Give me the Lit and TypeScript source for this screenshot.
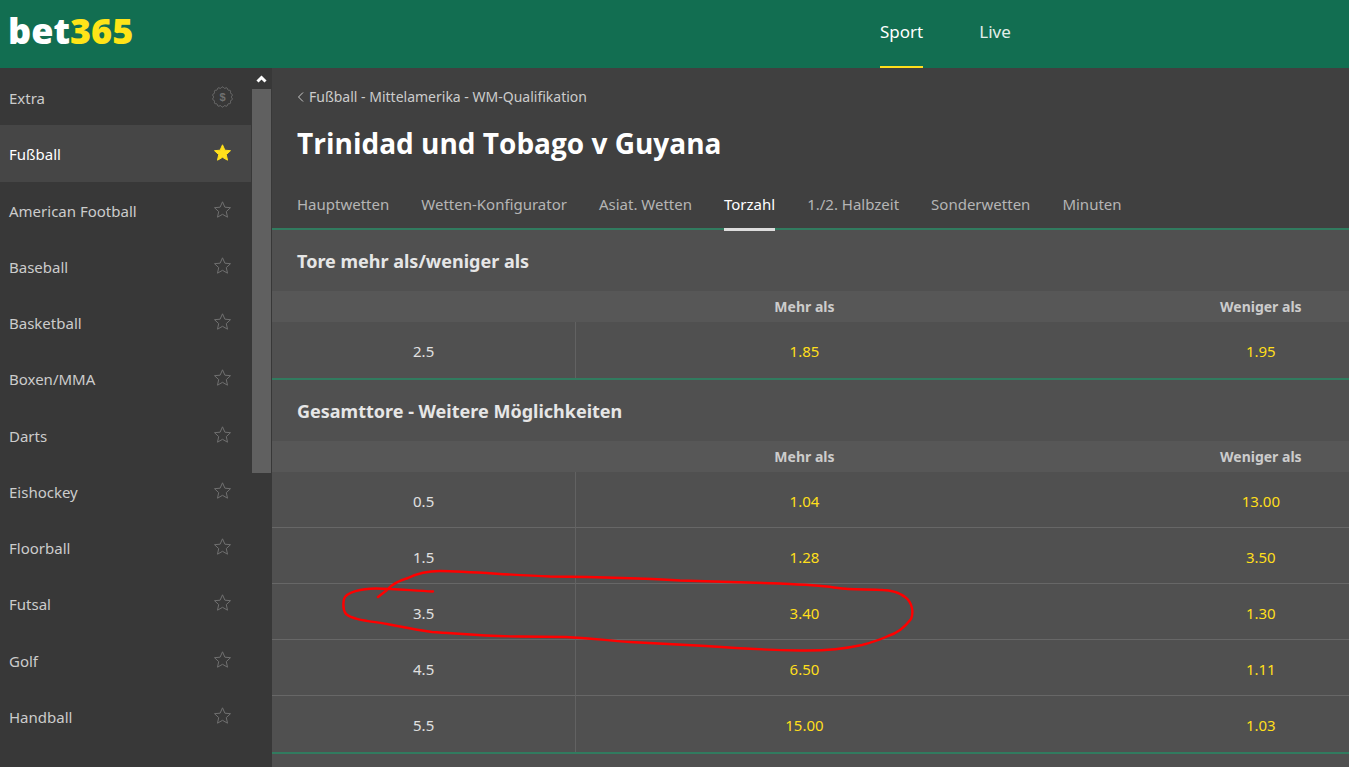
import { LitElement, html, css, svg } from "lit";
import { customElement, property } from "lit/decorators.js";
import { classMap } from "lit/directives/class-map.js";

const SPORTS = [
  "Extra", "Fußball", "American Football", "Baseball", "Basketball", "Boxen/MMA",
  "Darts", "Eishockey", "Floorball", "Futsal", "Golf", "Handball",
];

const TABS = [
  "Hauptwetten", "Wetten-Konfigurator", "Asiat. Wetten", "Torzahl",
  "1./2. Halbzeit", "Sonderwetten", "Minuten",
];

type Row = [string, string, string];

const MARKETS: { title: string; rows: Row[] }[] = [
  { title: "Tore mehr als/weniger als", rows: [["2.5", "1.85", "1.95"]] },
  {
    title: "Gesamttore - Weitere Möglichkeiten",
    rows: [
      ["0.5", "1.04", "13.00"],
      ["1.5", "1.28", "3.50"],
      ["3.5", "3.40", "1.30"],
      ["4.5", "6.50", "1.11"],
      ["5.5", "15.00", "1.03"],
    ],
  },
];

const starPath = "M11 2.8l2.4 5.4 5.6.5-4.2 3.9 1.2 5.6-5-2.9-5 2.9 1.2-5.6-4.2-3.9 5.6-.5z";

/* Scalloped badge outline around the coin symbol. */
const badgePath = (() => {
  const points: string[] = [];
  for (let i = 0; i <= 120; i++) {
    const a = (i / 120) * Math.PI * 2;
    const r = 9.5 + 0.6 * Math.cos(a * 14);
    points.push(`${(11 + r * Math.sin(a)).toFixed(2)} ${(11 - r * Math.cos(a)).toFixed(2)}`);
  }
  return `M${points.join("L")}Z`;
})();

@customElement("site-header")
export class SiteHeader extends LitElement {
  static styles = css`
    :host { display: block; }
    .bar {
      display: grid;
      grid-template-columns: 880fr 469fr;
      height: 68px;
      background: #126e51;
    }
    .logo {
      align-self: center;
      justify-self: start;
      margin-left: 8px;
      padding-bottom: 6px;
      display: flex;
      align-items: baseline;
      font: 800 36px/40px "Open Sans", sans-serif;
      color: #fff;
      text-decoration: none;
    }
    .digits { color: #ffe418; }
    .nav { display: flex; gap: 56px; }
    .link {
      box-sizing: border-box;
      height: 68px;
      padding-top: 20px;
      font-size: 17px;
      line-height: 24px;
      color: #e3eeea;
      text-decoration: none;
      border-bottom: 2px solid transparent;
    }
    .current { color: #fff; border-color: #ffdf1b; }
  `;
  render() {
    return html`
      <header class="bar">
        <a class="logo" href="#"><span>bet</span><span class="digits">365</span></a>
        <nav class="nav">
          <a class="link current" href="#sport">Sport</a>
          <a class="link" href="#live">Live</a>
        </nav>
      </header>
    `;
  }
}

@customElement("sport-list")
export class SportList extends LitElement {
  static styles = css`
    :host { display: flex; background: #383838; }
    .list {
      flex: 1;
      display: grid;
      grid-auto-rows: 1fr;
      height: 675px;
      margin: 0;
      padding: 1px 0 0;
      list-style: none;
    }
    .item { display: flex; align-items: center; padding: 0 18px 0 9px; }
    .active { background: #464646; }
    .name {
      flex: 1;
      font-size: 15px;
      line-height: 20px;
      padding-top: 2px;
      color: #ccc;
      text-decoration: none;
    }
    .active .name { color: #fff; }
    .mark {
      display: block;
      width: 22px;
      height: 22px;
      padding: 0;
      border: 0;
      background: none;
      color: #707070;
    }
    .active .mark { color: #ffdf1b; }
    .active path { fill: currentColor; }
    .icon { display: block; fill: none; stroke: currentColor; }
    .coin { fill: currentColor; stroke: none; font-size: 11px; font-weight: 700; text-anchor: middle; }
    .scroll { width: 19px; margin: 0 1px; }
    .up { display: block; width: 19px; height: 21px; padding: 0; border: 0; background: none; color: #fff; }
    .arrow { display: block; fill: none; stroke: currentColor; stroke-width: 3; }
    .thumb { height: 384px; background: #606060; }
  `;
  render() {
    return html`
      <ul class="list">
        ${SPORTS.map((name, i) => html`
          <li class=${classMap({ item: true, active: i === 1 })}>
            <a class="name" href="#">${name}</a>
            <button class="mark" aria-label="Favorit ${name}">
              <svg class="icon" width="22" height="22" viewBox="-0.5 0 22 22">
                ${i === 0
                  ? svg`<path d=${badgePath}/><text class="coin" x="11" y="15">$</text>`
                  : svg`<path d=${starPath}/>`}
              </svg>
            </button>
          </li>`)}
      </ul>
      <div class="scroll">
        <button class="up" aria-label="Nach oben">
          <svg class="arrow" width="19" height="21" viewBox="0 0 19 21"><path d="M5.5 13.500l4-4 4 4"/></svg>
        </button>
        <div class="thumb"></div>
      </div>
    `;
  }
}

@customElement("odds-market")
export class OddsMarket extends LitElement {
  @property() heading = "";
  @property({ attribute: false }) rows: Row[] = [];
  static styles = css`
    :host { display: block; border-bottom: 2px solid #317b5f; }
    .heading {
      margin: 0;
      padding: 19px 25px 18px;
      font-size: 18px;
      line-height: 24px;
      font-weight: 700;
      color: #e6e6e6;
    }
    .table { width: 100%; min-width: 1217px; border-spacing: 0; table-layout: fixed; text-align: center; }
    .line { width: 25%; }
    .head { height: 31px; padding: 0; background: #575757; color: #ccc; font-size: 14px; line-height: 20px; font-weight: 700; }
    .cell { box-sizing: border-box; height: 56px; padding: 2px 0 0; border-bottom: 1px solid #676767; font-size: 15px; line-height: 20px; font-weight: 400; color: #e0e0e0; }
    .label { border-right: 1px solid #626262; }
    .row:last-child .cell { border-bottom: 0; }
    .odds { width: 100%; padding: 0; border: 0; background: none; color: #ffdf1b; font: inherit; }
  `;
  render() {
    return html`
      <h2 class="heading">${this.heading}</h2>
      <table class="table" aria-label=${this.heading}>
        <thead>
          <tr><td class="head line"></td><th class="head" scope="col">Mehr als</th><th class="head" scope="col">Weniger als</th></tr>
        </thead>
        <tbody>
          ${this.rows.map(([line, over, under]) => html`
            <tr class="row">
              <th class="cell label" scope="row">${line}</th>
              <td class="cell"><button class="odds">${over}</button></td>
              <td class="cell"><button class="odds">${under}</button></td>
            </tr>`)}
        </tbody>
      </table>
    `;
  }
}

@customElement("app-root")
export class AppRoot extends LitElement {
  static styles = css`
    :host {
      display: flex;
      flex-direction: column;
      height: 100vh;
      overflow: hidden;
      font-family: "Noto Sans", "Segoe UI", sans-serif;
      background: #383838;
    }
    .body { flex: 1; min-height: 0; display: grid; grid-template-columns: 272px minmax(0, 1fr); }
    .main { position: relative; overflow: hidden; background: #505050; }
    .top { background: #404040; padding: 18px 25px 0; border-bottom: 2px solid #317b5f; }
    .crumb { display: flex; align-items: center; gap: 5px; font-size: 14px; line-height: 22px; color: #ccc; text-decoration: none; }
    .back { fill: none; stroke: currentColor; }
    .title { margin: 15px 0 0; font-family: "Open Sans", sans-serif; font-size: 28px; line-height: 40px; font-weight: 700; color: #fff; }
    .tabs { display: flex; gap: 32px; margin-top: 19px; }
    .tab { height: 46px; padding-top: 12px; box-sizing: border-box; font-size: 15px; line-height: 20px; color: #b5b5b5; text-decoration: none; white-space: nowrap; }
    .on { height: 49px; margin-bottom: -3px; color: #fff; border-bottom: 3px solid #ddd; }
    .ink { position: absolute; left: 68px; top: 496px; fill: none; stroke: #f00; stroke-width: 2.4; stroke-linecap: round; stroke-linejoin: round; pointer-events: none; }
  `;
  render() {
    return html`
      <site-header></site-header>
      <div class="body">
        <sport-list></sport-list>
        <main class="main">
          <div class="top">
            <a class="crumb" href="#">
              <svg class="back" width="7" height="12" viewBox="0 0 7 12"><path d="M6 1.5L1.5 6 6 10.5"/></svg>
              <span>Fußball - Mittelamerika - WM-Qualifikation</span>
            </a>
            <h1 class="title">Trinidad und Tobago v Guyana</h1>
            <nav class="tabs">
              ${TABS.map((t) => html`<a class=${classMap({ tab: true, on: t === "Torzahl" })} href="#">${t}</a>`)}
            </nav>
          </div>
          ${MARKETS.map((m) => html`<odds-market .heading=${m.title} .rows=${m.rows}></odds-market>`)}
          <svg class="ink" width="580" height="96" viewBox="340 564 580 96">
            <path d="M433 591.5C412 590.5 394 588.5 376 588.5C362 588.5 346 592 344 599C343 604 343 610 346 614C353 620 370 621 387 624C403 627 418 630 432 632C470 634.5 490 636.5 520 636.5L566 637C590 638 606 640.5 630 642L706 646C740 648.5 770 650 800 650.5C825 651 846 648.5 862 645C875 641.5 882 639 888 636C898 633 905 627 911 619C914 612 912 602 905 597C900 592.5 890 590 883 590C870 589 850 590 838 588C820 585 800 584.5 780 583.5L680 580.5C640 578 600 577 550 576.5C510 575 470 571.5 440 571C428 571 418 573 408 578C398 581 391 585 387 590L378 597"/>
          </svg>
        </main>
      </div>
    `;
  }
}
